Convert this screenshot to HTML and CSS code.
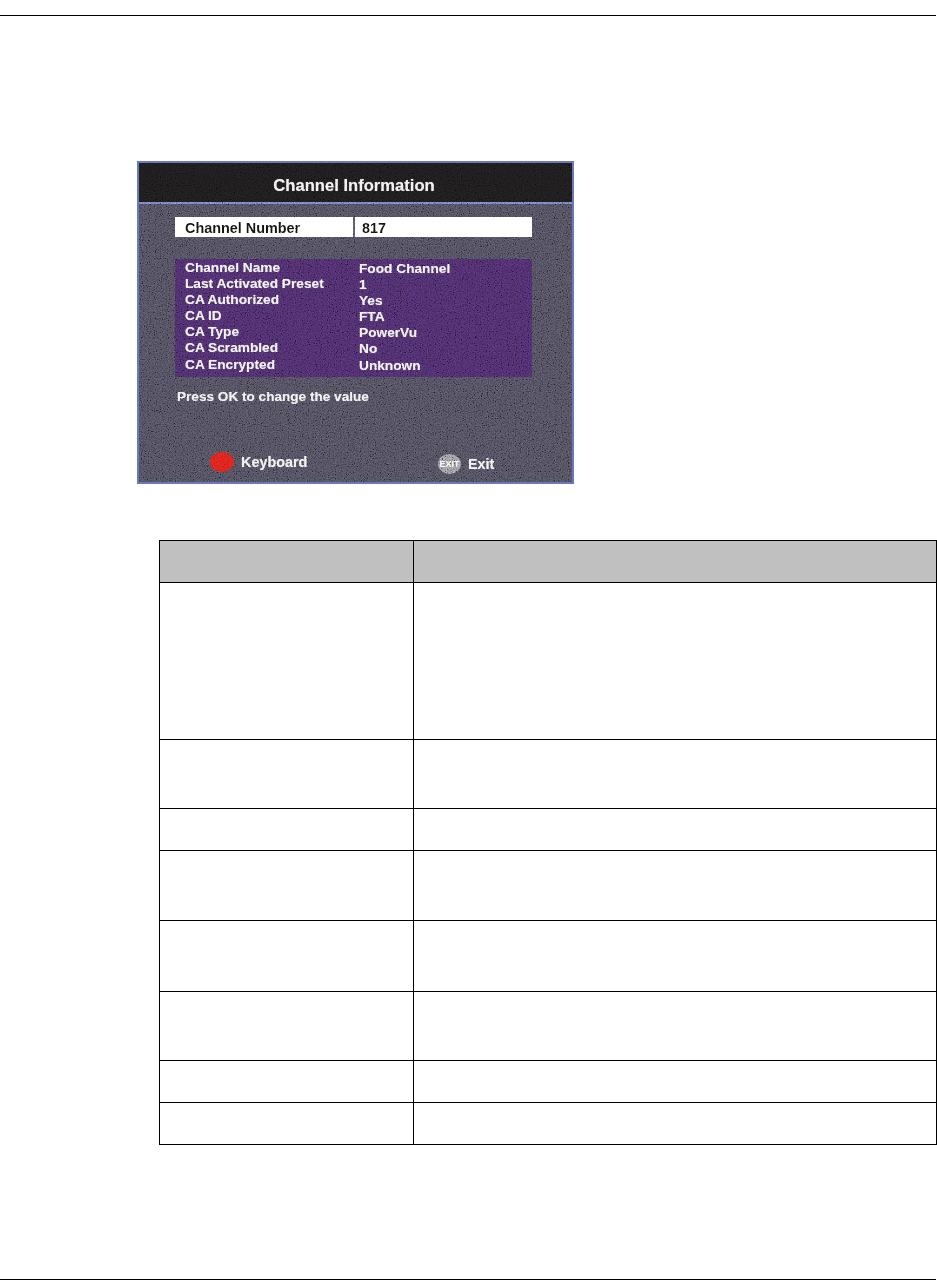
FILE: index.html
```html
<!DOCTYPE html>
<html lang="en">
<head>
<meta charset="utf-8">
<title>Channel Information</title>
<link rel="stylesheet" href="styles.css">
</head>
<body>
<div class="page">
  <hr class="rule rule-top">
  <section class="screen">
    <header class="screen-title">Channel Information</header>
    <div class="screen-body">
      <div class="number-bar">
        <div class="number-label">Channel Number</div>
        <div class="number-value">817</div>
      </div>
      <div class="info-panel">
        <div class="info-labels">
          <div>Channel Name</div>
          <div>Last Activated Preset</div>
          <div>CA Authorized</div>
          <div>CA ID</div>
          <div>CA Type</div>
          <div>CA Scrambled</div>
          <div>CA Encrypted</div>
        </div>
        <div class="info-values">
          <div>Food Channel</div>
          <div>1</div>
          <div>Yes</div>
          <div>FTA</div>
          <div>PowerVu</div>
          <div>No</div>
          <div>Unknown</div>
        </div>
      </div>
      <p class="hint">Press OK to change the value</p>
      <div class="keys">
        <div class="key key-keyboard"><span class="red-dot"></span><span>Keyboard</span></div>
        <div class="key key-exit"><span class="exit-dot">EXIT</span><span class="exit-text">Exit</span></div>
      </div>
    </div>
    <svg class="noise" width="433" height="319" aria-hidden="true">
      <filter id="grain" x="0" y="0" width="100%" height="100%">
        <feTurbulence type="fractalNoise" baseFrequency="0.85" numOctaves="2" seed="7" stitchTiles="stitch"/>
        <feColorMatrix type="matrix" values="0.5 0.5 0 0 0  0.5 0.5 0 0 0  0.5 0.5 0 0 0  0 0 0 0 1"/>
        <feComponentTransfer>
          <feFuncR type="linear" slope="2.4" intercept="-0.75"/>
          <feFuncG type="linear" slope="2.4" intercept="-0.75"/>
          <feFuncB type="linear" slope="2.4" intercept="-0.75"/>
        </feComponentTransfer>
      </filter>
      <rect width="433" height="319" filter="url(#grain)"/>
    </svg>
  </section>
  <table class="grid">
    <colgroup><col class="col-a"><col class="col-b"></colgroup>
    <tr class="r-head"><th></th><th></th></tr>
    <tr class="r-157"><td></td><td></td></tr>
    <tr class="r-69"><td></td><td></td></tr>
    <tr class="r-42"><td></td><td></td></tr>
    <tr class="r-70"><td></td><td></td></tr>
    <tr class="r-71"><td></td><td></td></tr>
    <tr class="r-69"><td></td><td></td></tr>
    <tr class="r-42"><td></td><td></td></tr>
    <tr class="r-42"><td></td><td></td></tr>
  </table>
  <hr class="rule rule-bottom">
</div>
</body>
</html>
```
FILE: styles.css
```css
* { box-sizing: border-box; }
html, body { margin: 0; padding: 0; background: #fff; }
body { font-family: "Liberation Sans", Arial, sans-serif; }
.page { width: 937px; height: 1285px; padding-top: 15px; }

.rule { border: 0; margin: 0; height: 1px; width: 936px; background: #000; }
.rule-bottom { margin-top: 134px; }

.screen {
  position: relative;
  width: 437px;
  height: 323px;
  margin: 145px 0 0 137px;
  border: 2px solid #6b78bb;
  background: #4a4856;
  color: #f0f0f0;
  font-weight: bold;
  text-shadow: 0 0 1px rgba(255, 255, 255, 0.3);
  display: flex;
  flex-direction: column;
}
.noise {
  position: absolute;
  left: 0;
  top: 0;
  pointer-events: none;
  mix-blend-mode: overlay;
  opacity: 0.5;
}
.screen-title {
  height: 41px;
  padding: 2px 3px 0 0;
  background: #1c1a1b;
  border-bottom: 2px solid #6b78bb;
  color: #efefef;
  font-size: 16.6px;
  line-height: 41px;
  text-align: center;
}
.screen-body {
  flex: 1;
  display: flex;
  flex-direction: column;
  padding: 13px 40px 0 36px;
}
.number-bar {
  display: flex;
  height: 20px;
  background: #fff;
  color: #111;
  font-size: 14.4px;
  line-height: 22px;
  text-shadow: none;
}
.number-label { width: 180px; padding-left: 10px; border-right: 2px solid #55525f; }
.number-value { padding-left: 7px; }

.info-panel {
  display: flex;
  height: 118px;
  margin-top: 22px;
  padding: 1px 0 0 10px;
  background: #472a62;
  font-size: 13.7px;
  line-height: 16.1px;
}
.info-labels { width: 174px; }
.info-values { padding-top: 1px; }

.hint { margin: 12px 0 0 2px; font-size: 13.6px; line-height: 16px; }

.keys {
  display: flex;
  margin-top: 45px;
  padding-left: 35px;
  font-size: 14.4px;
  line-height: 20px;
}
.key { display: flex; align-items: center; gap: 7px; }
.key-keyboard { width: 228px; }
.key-exit { padding-top: 4px; }
.red-dot {
  width: 24px;
  height: 20px;
  border-radius: 50%;
  background: #d8201a;
}
.exit-dot {
  width: 23px;
  height: 20px;
  border-radius: 50%;
  background: #8e8c92;
  color: #f4f4f4;
  font-size: 9px;
  line-height: 20px;
  text-align: center;
}
.exit-text { font-size: 14.4px; }

.grid {
  width: 778px;
  height: 605px;
  margin: 56px 0 0 159px;
  border-collapse: collapse;
  table-layout: fixed;
}
.grid th, .grid td { border: 1px solid #000; padding: 0; }
.grid th { background: #c0c0c0; }
.col-a { width: 254px; }
.r-head { height: 42px; }
.r-157 { height: 157px; }
.r-69 { height: 69px; }
.r-42 { height: 42px; }
.r-70 { height: 70px; }
.r-71 { height: 71px; }
```
